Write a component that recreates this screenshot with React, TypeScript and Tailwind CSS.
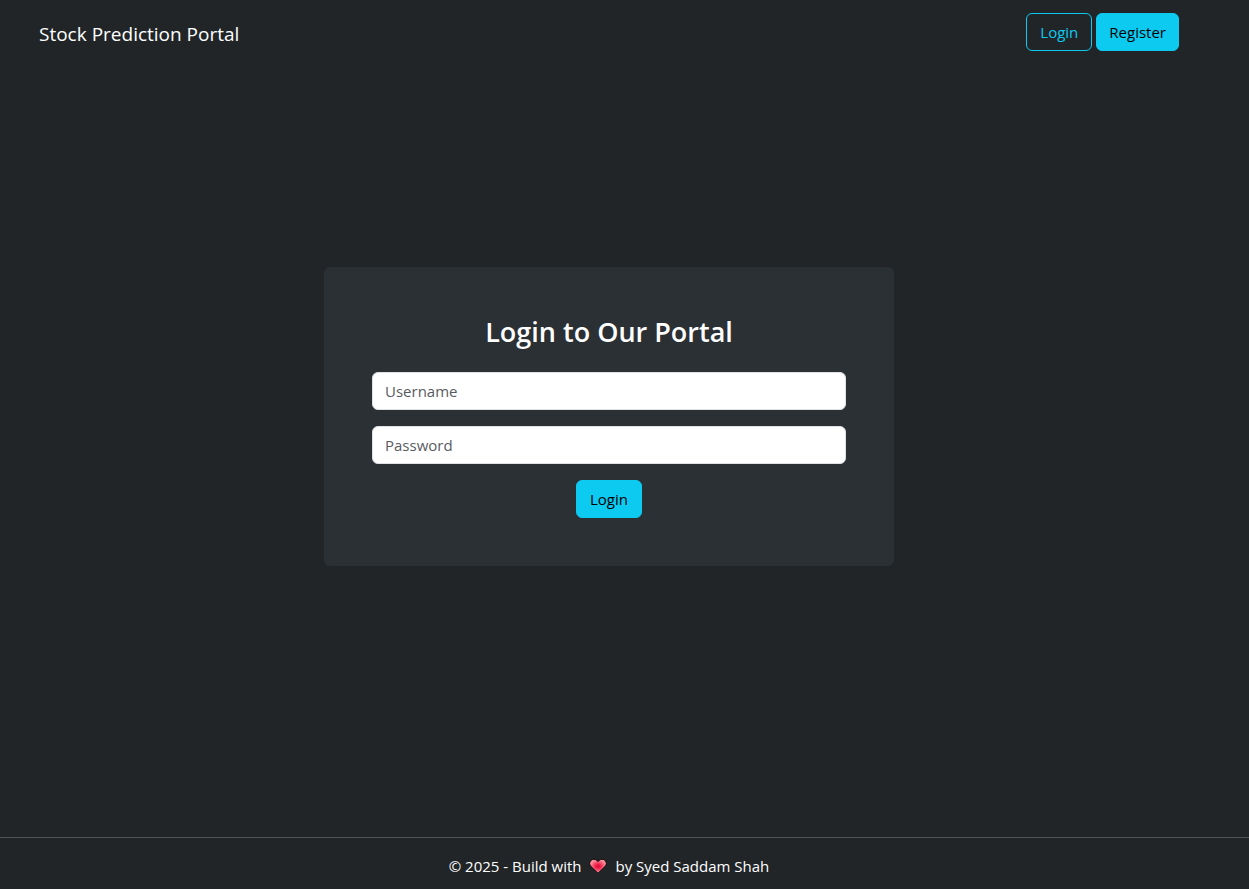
import { useState } from "react";
import type { ReactNode } from "react";

function Button({ outline, type = "button", children }: { outline?: boolean; type?: "button" | "submit"; children: ReactNode }) {
  return (
    <button
      type={type}
      className={
        outline
          ? "h-[38px] min-w-[66px] rounded-md border border-[#0dcaf0] px-3 text-[#0dcaf0] hover:bg-[#0dcaf0] hover:text-black"
          : "h-[38px] min-w-[66px] rounded-md border border-[#0dcaf0] bg-[#0dcaf0] px-3 text-black hover:bg-[#31d2f2]"
      }
    >
      {children}
    </button>
  );
}

function Heart() {
  return (
    <svg viewBox="0 0 18 16" className="mx-2 h-4 w-[18px]" role="img" aria-label="love">
      <defs>
        <radialGradient id="heart" cx="50%" cy="50%" r="50%">
          <stop offset="0.2" stopColor="#e81340" />
          <stop offset="0.95" stopColor="#ff8f9c" />
        </radialGradient>
      </defs>
      <path
        d="M9 15.2 2 8.600C.2 6.800.2 4.200 1.900 2.500 3.600.9 6.200.9 7.900 2.500L9 3.500l1.100-1c1.700-1.600 4.300-1.600 6 0 1.700 1.700 1.700 4.300-.1 6.100z"
        fill="url(#heart)"
        stroke="#0c0c0d"
        strokeWidth="1"
        strokeLinejoin="round"
      />
    </svg>
  );
}

function Field({ label, type, value, onChange }: { label: string; type: string; value: string; onChange: (value: string) => void }) {
  return (
    <input
      type={type}
      aria-label={label}
      placeholder={label}
      value={value}
      onChange={(e) => onChange(e.target.value)}
      className="mb-4 block h-[38px] w-full rounded-md border border-[#dee2e6] bg-white px-3 text-[#212529] placeholder:text-[#595c5f]"
    />
  );
}

export default function App() {
  const [username, setUsername] = useState("");
  const [password, setPassword] = useState("");

  return (
    <div className="flex min-h-screen flex-col bg-[#212528] font-['Open_Sans',sans-serif] text-[15px] leading-6 text-white">
      <header className="py-[13px] pr-[31px]">
        <nav className="mx-auto flex max-w-[1140px] items-center justify-between">
          <a href="#" className="pt-1 text-[19px] leading-8">Stock Prediction Portal</a>
          <div className="flex gap-1">
            <Button outline>Login</Button>
            <Button>Register</Button>
          </div>
        </nav>
      </header>

      <main className="flex flex-1 items-center pr-[31px] pb-[69px]">
        <div className="mx-auto w-full max-w-[570px] rounded-md bg-[#2b3035] p-12">
          <h1 className="mb-6 text-center text-[27px] leading-[33px] font-semibold">Login to Our Portal</h1>
          <form onSubmit={(e) => e.preventDefault()} className="text-center">
            <Field label="Username" type="text" value={username} onChange={setUsername} />
            <Field label="Password" type="password" value={password} onChange={setPassword} />
            <Button type="submit">Login</Button>
          </form>
        </div>
      </main>

      <footer className="border-t border-[#515457] pt-4 pb-[11px]">
        <p className="flex items-center justify-center pr-[31px]">
          <span>&copy; 2025 - Build with</span>
          <Heart />
          <span>by Syed Saddam Shah</span>
        </p>
      </footer>
    </div>
  );
}
